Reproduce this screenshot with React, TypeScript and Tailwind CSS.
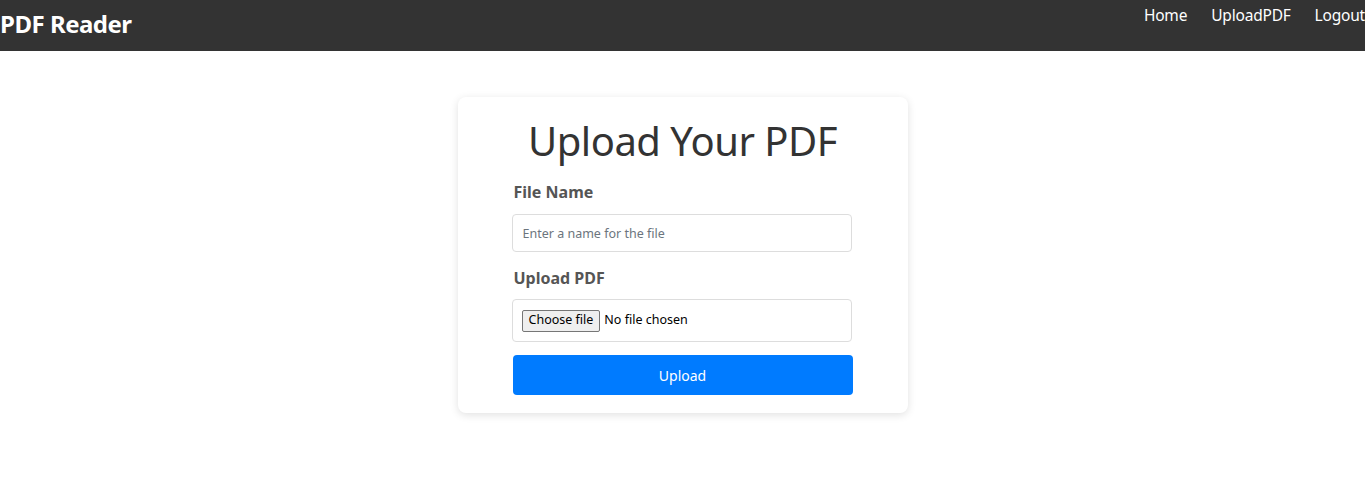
import React from "react";

export default function App() {
  return (
    <div className="min-h-[479px] bg-white" style={{ fontFamily: '"Noto Sans", "Open Sans", sans-serif' }}>
      <nav className="h-[51px] bg-[#333333] flex justify-between items-start text-white">
        <div className="text-[24px] font-bold leading-[48px] tracking-[-0.5px]">PDF Reader</div>
        <ul className="flex gap-[24px] pt-[3px] text-[15.5px] leading-[24px] tracking-[-0.2px]">
          <li>Home</li>
          <li>UploadPDF</li>
          <li>Logout</li>
        </ul>
      </nav>
      <div className="flex justify-center pt-[46px]">
        <div className="w-[450px] rounded-lg bg-white shadow-[0_2px_8px_rgba(0,0,0,0.12)] px-[54px] pt-[16px] pb-[18px]">
          <h1 className="text-center text-[40px] leading-[56px] text-[#333333] tracking-[-0.5px]">Upload Your PDF</h1>
          <label className="block mt-[11px] ml-[2px] text-[16px] font-bold leading-[24px] text-[#555555]">File Name</label>
          <input
            type="text"
            placeholder="Enter a name for the file"
            className="block mt-[10px] w-[340px] h-[38px] border border-[#dddddd] rounded px-[10px] text-[12.5px] placeholder:text-[#6c757d] outline-none"
          />
          <label className="block mt-[14px] ml-[2px] text-[16px] font-bold leading-[24px] text-[#555555]">Upload PDF</label>
          <div className="mt-[9px] w-[340px] h-[43px] border border-[#dddddd] rounded flex items-center px-[9px] text-[12.5px] text-black">
            <span className="h-[22px] px-[6px] border border-[#767676] rounded-[2px] bg-[#efefef] flex items-center">Choose file</span>
            <span className="ml-[4px]">No file chosen</span>
          </div>
          <button className="mt-[13px] w-[340px] h-[40px] rounded bg-[#007bff] text-white text-[14px] ml-[1px]">Upload</button>
        </div>
      </div>
    </div>
  );
}
